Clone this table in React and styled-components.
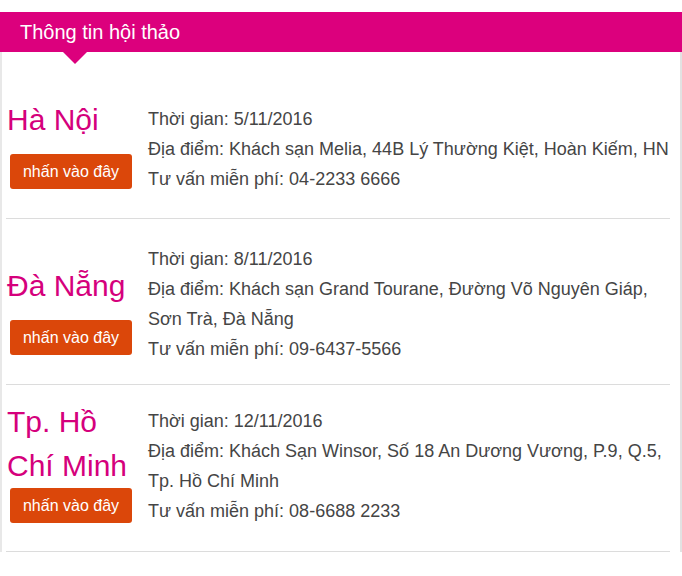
import React from "react";
import styled, { createGlobalStyle } from "styled-components";

const Global = createGlobalStyle`
  html, body { margin: 0; padding: 0; background: #fff; }
  body { font-family: "Liberation Sans", Arial, sans-serif; }
`;

const Wrapper = styled.div`
  width: 682px;
  padding-top: 12px;
`;

const Header = styled.div`
  position: relative;
  height: 40px;
  background: #dc007d;
  color: #fff;
  font-size: 20px;
  line-height: 40px;
  padding-left: 20px;
  &::after {
    content: "";
    position: absolute;
    left: 63px;
    top: 40px;
    width: 0;
    height: 0;
    border-left: 12px solid transparent;
    border-right: 12px solid transparent;
    border-top: 12px solid #dc007d;
    z-index: 1;
  }
`;

const Panel = styled.div`
  border-left: 2px solid #e8e8e8;
  border-right: 2px solid #e2e2e2;
  padding: 0 10px 0 4px;
`;

const Row = styled.div`
  box-sizing: border-box;
  height: ${(p) => p.$h}px;
  display: flex;
  align-items: flex-start;
  border-bottom: 1px solid #dcdcdc;
`;

const Left = styled.div`
  width: 142px;
  flex: none;
  display: flex;
  flex-direction: column;
  align-items: flex-start;
  padding-top: ${(p) => p.$top}px;
`;

const City = styled.div`
  color: #d5007c;
  font-size: 30px;
  line-height: 44px;
  padding-left: 1px;
`;

const Button = styled.button`
  margin: ${(p) => (p.$tight ? "0" : "12px")} 0 0 4px;
  width: 122px;
  height: 35px;
  border: none;
  border-radius: 3px;
  background: #db470a;
  color: #fff;
  font-family: "Liberation Sans", Arial, sans-serif;
  font-size: 16px;
  padding: 0;
  cursor: pointer;
`;

const Info = styled.div`
  flex: 1;
  color: #454545;
  font-size: 18px;
  line-height: 30px;
  padding-top: ${(p) => p.$top}px;
`;

const Line = styled.div``;

const events = [
  {
    city: "Hà Nội",
    time: "5/11/2016",
    place: "Khách sạn Melia, 44B Lý Thường Kiệt, Hoàn Kiếm, HN",
    phone: "04-2233 6666",
    h: 167,
    leftTop: 46,
    infoTop: 52,
  },
  {
    city: "Đà Nẵng",
    time: "8/11/2016",
    place: "Khách sạn Grand Tourane, Đường Võ Nguyên Giáp, Sơn Trà, Đà Nẵng",
    phone: "09-6437-5566",
    h: 166,
    leftTop: 45,
    infoTop: 25,
  },
  {
    city: "Tp. Hồ Chí Minh",
    time: "12/11/2016",
    place: "Khách Sạn Winsor, Số 18 An Dương Vương, P.9, Q.5, Tp. Hồ Chí Minh",
    phone: "08-6688 2233",
    h: 167,
    leftTop: 15,
    infoTop: 21,
    tight: true,
  },
];

export default function App() {
  return (
    <Wrapper>
      <Global />
      <Header>Thông tin hội thảo</Header>
      <Panel>
        {events.map((e) => (
          <Row key={e.city} $h={e.h}>
            <Left $top={e.leftTop}>
              <City>{e.city}</City>
              <Button $tight={e.tight}>nhấn vào đây</Button>
            </Left>
            <Info $top={e.infoTop}>
              <Line>Thời gian: {e.time}</Line>
              <Line>Địa điểm: {e.place}</Line>
              <Line>Tư vấn miễn phí: {e.phone}</Line>
            </Info>
          </Row>
        ))}
      </Panel>
    </Wrapper>
  );
}
